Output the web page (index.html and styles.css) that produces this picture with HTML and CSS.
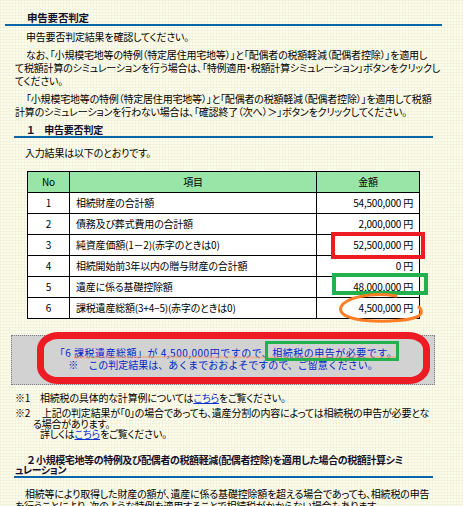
FILE: index.html
```html
<!DOCTYPE html>
<html lang="ja">
<head>
<meta charset="utf-8">
<title>申告要否判定</title>
<link rel="stylesheet" href="styles.css">
</head>
<body>
<div class="page">
  <h1 class="title">申告要否判定</h1>
  <div class="lead">
    <p>申告要否判定結果を確認してください。</p>
    <p>なお、「小規模宅地等の特例（特定居住用宅地等）」と「配偶者の税額軽減（配偶者控除）」を適用し<br>て税額計算のシミュレーションを行う場合は、「特例適用・税額計算シミュレーション」ボタンをクリックし<br>てください。</p>
    <p>「小規模宅地等の特例（特定居住用宅地等）」と「配偶者の税額軽減（配偶者控除）」を適用して税額<br>計算のシミュレーションを行わない場合は、「確認終了（次へ）＞」ボタンをクリックしてください。</p>
  </div>

  <h2 class="sec sec-1">１　申告要否判定</h2>
  <p class="intro">入力結果は以下のとおりです。</p>

  <table class="result">
    <thead>
      <tr><th class="c-no">No</th><th class="c-item">項目</th><th class="c-amt">金額</th></tr>
    </thead>
    <tbody>
      <tr><td class="c-no">1</td><td class="c-item">相続財産の合計額</td><td class="c-amt">54,500,000 円</td></tr>
      <tr><td class="c-no">2</td><td class="c-item">債務及び葬式費用の合計額</td><td class="c-amt">2,000,000 円</td></tr>
      <tr><td class="c-no">3</td><td class="c-item">純資産価額(1－2)(赤字のときは0)</td><td class="c-amt">52,500,000 円</td></tr>
      <tr><td class="c-no">4</td><td class="c-item">相続開始前3年以内の贈与財産の合計額</td><td class="c-amt">0 円</td></tr>
      <tr><td class="c-no">5</td><td class="c-item">遺産に係る基礎控除額</td><td class="c-amt">48,000,000 円</td></tr>
      <tr><td class="c-no">6</td><td class="c-item">課税遺産総額(3+4−5)(赤字のときは0)</td><td class="c-amt">4,500,000 円</td></tr>
    </tbody>
  </table>

  <div class="verdict">
    <div class="verdict-main">「6 課税遺産総額」が 4,500,000円ですので、相続税の申告が必要です。</div>
    <div>※　この判定結果は、あくまでおおよそですので、ご留意ください。</div>
  </div>

  <div class="notes">
    <div class="note note-1"><span class="mark">※1</span><span class="body">相続税の具体的な計算例については<a href="#">こちら</a>をご覧ください。</span></div>
    <div class="note note-2"><span class="mark">※2</span><div class="body"><div class="first">上記の判定結果が「0」の場合であっても、遺産分割の内容によっては相続税の申告が必要とな</div>る場合があります。<div class="more">詳しくは<a href="#">こちら</a>をご覧ください。</div></div></div>
  </div>

  <h2 class="sec sec-2">２ 小規模宅地等の特例及び配偶者の税額軽減(配偶者控除)を適用した場合の税額計算シミ<br>ュレーション</h2>
  <p class="tail">相続等により取得した財産の額が、遺産に係る基礎控除額を超える場合であっても、相続税の申告<br>を行うことにより、次のような特例を適用することで相続税がかからない場合もあります。</p>
</div>

<svg class="marks" width="463" height="506" viewBox="0 0 463 506" aria-hidden="true">
  <rect x="333" y="234" width="90" height="23" fill="none" stroke="#ed1c24" stroke-width="4"/>
  <rect x="334" y="275" width="92" height="18" fill="none" stroke="#22b14c" stroke-width="4"/>
  <path d="M396 296 C372 292 346 297 341 307 C337 318 362 322 390 321 C414 320 427 316 419 307" fill="none" stroke="#ff7f27" stroke-width="3" stroke-linecap="round"/>
  <path d="M74 357.5 C160 356 300 358.5 397 357" fill="none" stroke="#f0a070" stroke-opacity="0.55" stroke-width="2"/>
  <rect x="40.5" y="335.5" width="386" height="45" rx="18" ry="14" fill="none" stroke="#ed1c24" stroke-width="7"/>
  <rect x="266.5" y="342.5" width="131" height="17" fill="none" stroke="#22b14c" stroke-width="3"/>
</svg>
</body>
</html>
```

FILE: styles.css
```css
html, body {
  margin: 0;
  padding: 0;
}

body {
  position: relative;
  height: 506px;
  overflow: hidden;
  background-color: #fcfcea;
  background-image:
    linear-gradient(rgba(120, 120, 60, 0.05) 1px, transparent 1px),
    linear-gradient(90deg, rgba(120, 120, 60, 0.05) 1px, transparent 1px);
  background-size: 3px 3px;
  font-family: "Noto Sans CJK JP", "Noto Sans", sans-serif;
  font-size: 10px;
  letter-spacing: -0.2px;
  color: #000;
}

.page {
  margin-left: 5px;
  width: 437px;
}

.title {
  margin: 0;
  padding: 12px 0 0 22px;
  font-size: 10.5px;
  line-height: 12px;
  font-weight: bold;
  color: #160f2c;
  border-bottom: 2px solid #0a66a6;
}

.lead {
  padding-left: 10px;
}

.lead p {
  margin: 5px 0 0;
  line-height: 13px;
  text-indent: 11px;
  white-space: nowrap;
  font-feature-settings: "palt";
}

.lead p:first-child {
  margin-top: 4px;
}

.sec {
  margin: 6px 9px 0;
  padding-left: 13px;
  font-size: 10px;
  line-height: 12px;
  font-weight: bold;
  color: #160f2c;
  border-bottom: 2px solid #0a66a6;
  white-space: nowrap;
  font-feature-settings: "palt";
}

.intro {
  margin: 8px 0 0 20px;
  line-height: 13px;
  font-feature-settings: "palt";
}

.result {
  margin: 12px 0 0 22px;
  width: 393px;
  border-collapse: collapse;
  border: 1px solid #000;
  font-feature-settings: "palt";
}

.result th,
.result td {
  height: 20px;
  padding: 0 6px;
  border: 1px solid #000;
  line-height: 20px;
  white-space: nowrap;
}

.result th {
  background: #98e5a7;
  font-weight: normal;
  text-align: center;
}

.result td {
  background: #fff;
}

.result .c-no {
  width: 29px;
  text-align: center;
}

.result .c-item {
  width: 234px;
  text-align: left;
}

.result th.c-item {
  text-align: center;
}

.result .c-amt {
  text-align: right;
}

.result th.c-amt {
  text-align: center;
}

.verdict {
  margin: 16px 0 0 6px;
  width: 422px;
  padding: 11px 0 13px;
  border: 1px dotted #7a7a7a;
  background: #d2d2d2;
  color: #0026c8;
  font-size: 10px;
  letter-spacing: 0;
  line-height: 12px;
  text-align: center;
  white-space: nowrap;
}

.verdict-main {
  padding-left: 6px;
  letter-spacing: 0.5px;
}

.notes {
  margin: 6px 0 0 10px;
  font-feature-settings: "palt";
}

.note {
  display: flex;
}

.note a {
  color: #1030d0;
  text-decoration: underline;
}

.note-1 {
  line-height: 13px;
}

.note-1 .mark {
  width: 25px;
}

.note-2 {
  margin-top: 4px;
  line-height: 10.5px;
}

.note-2 .mark {
  width: 18px;
  flex: none;
}

.note-2 .body {
  white-space: nowrap;
}

.note-2 .first {
  text-indent: 9px;
}

.note-2 .more {
  padding-left: 7px;
}

.sec-2 {
  margin-top: 15px;
  padding-left: 1px;
  text-indent: 12px;
  line-height: 10.5px;
  letter-spacing: -0.4px;
}

.tail {
  margin: 10px 0 0;
  padding-left: 10px;
  line-height: 12px;
  text-indent: 10px;
  white-space: nowrap;
  font-feature-settings: "palt";
}

.marks {
  position: absolute;
  left: 0;
  top: 0;
  pointer-events: none;
}
```
